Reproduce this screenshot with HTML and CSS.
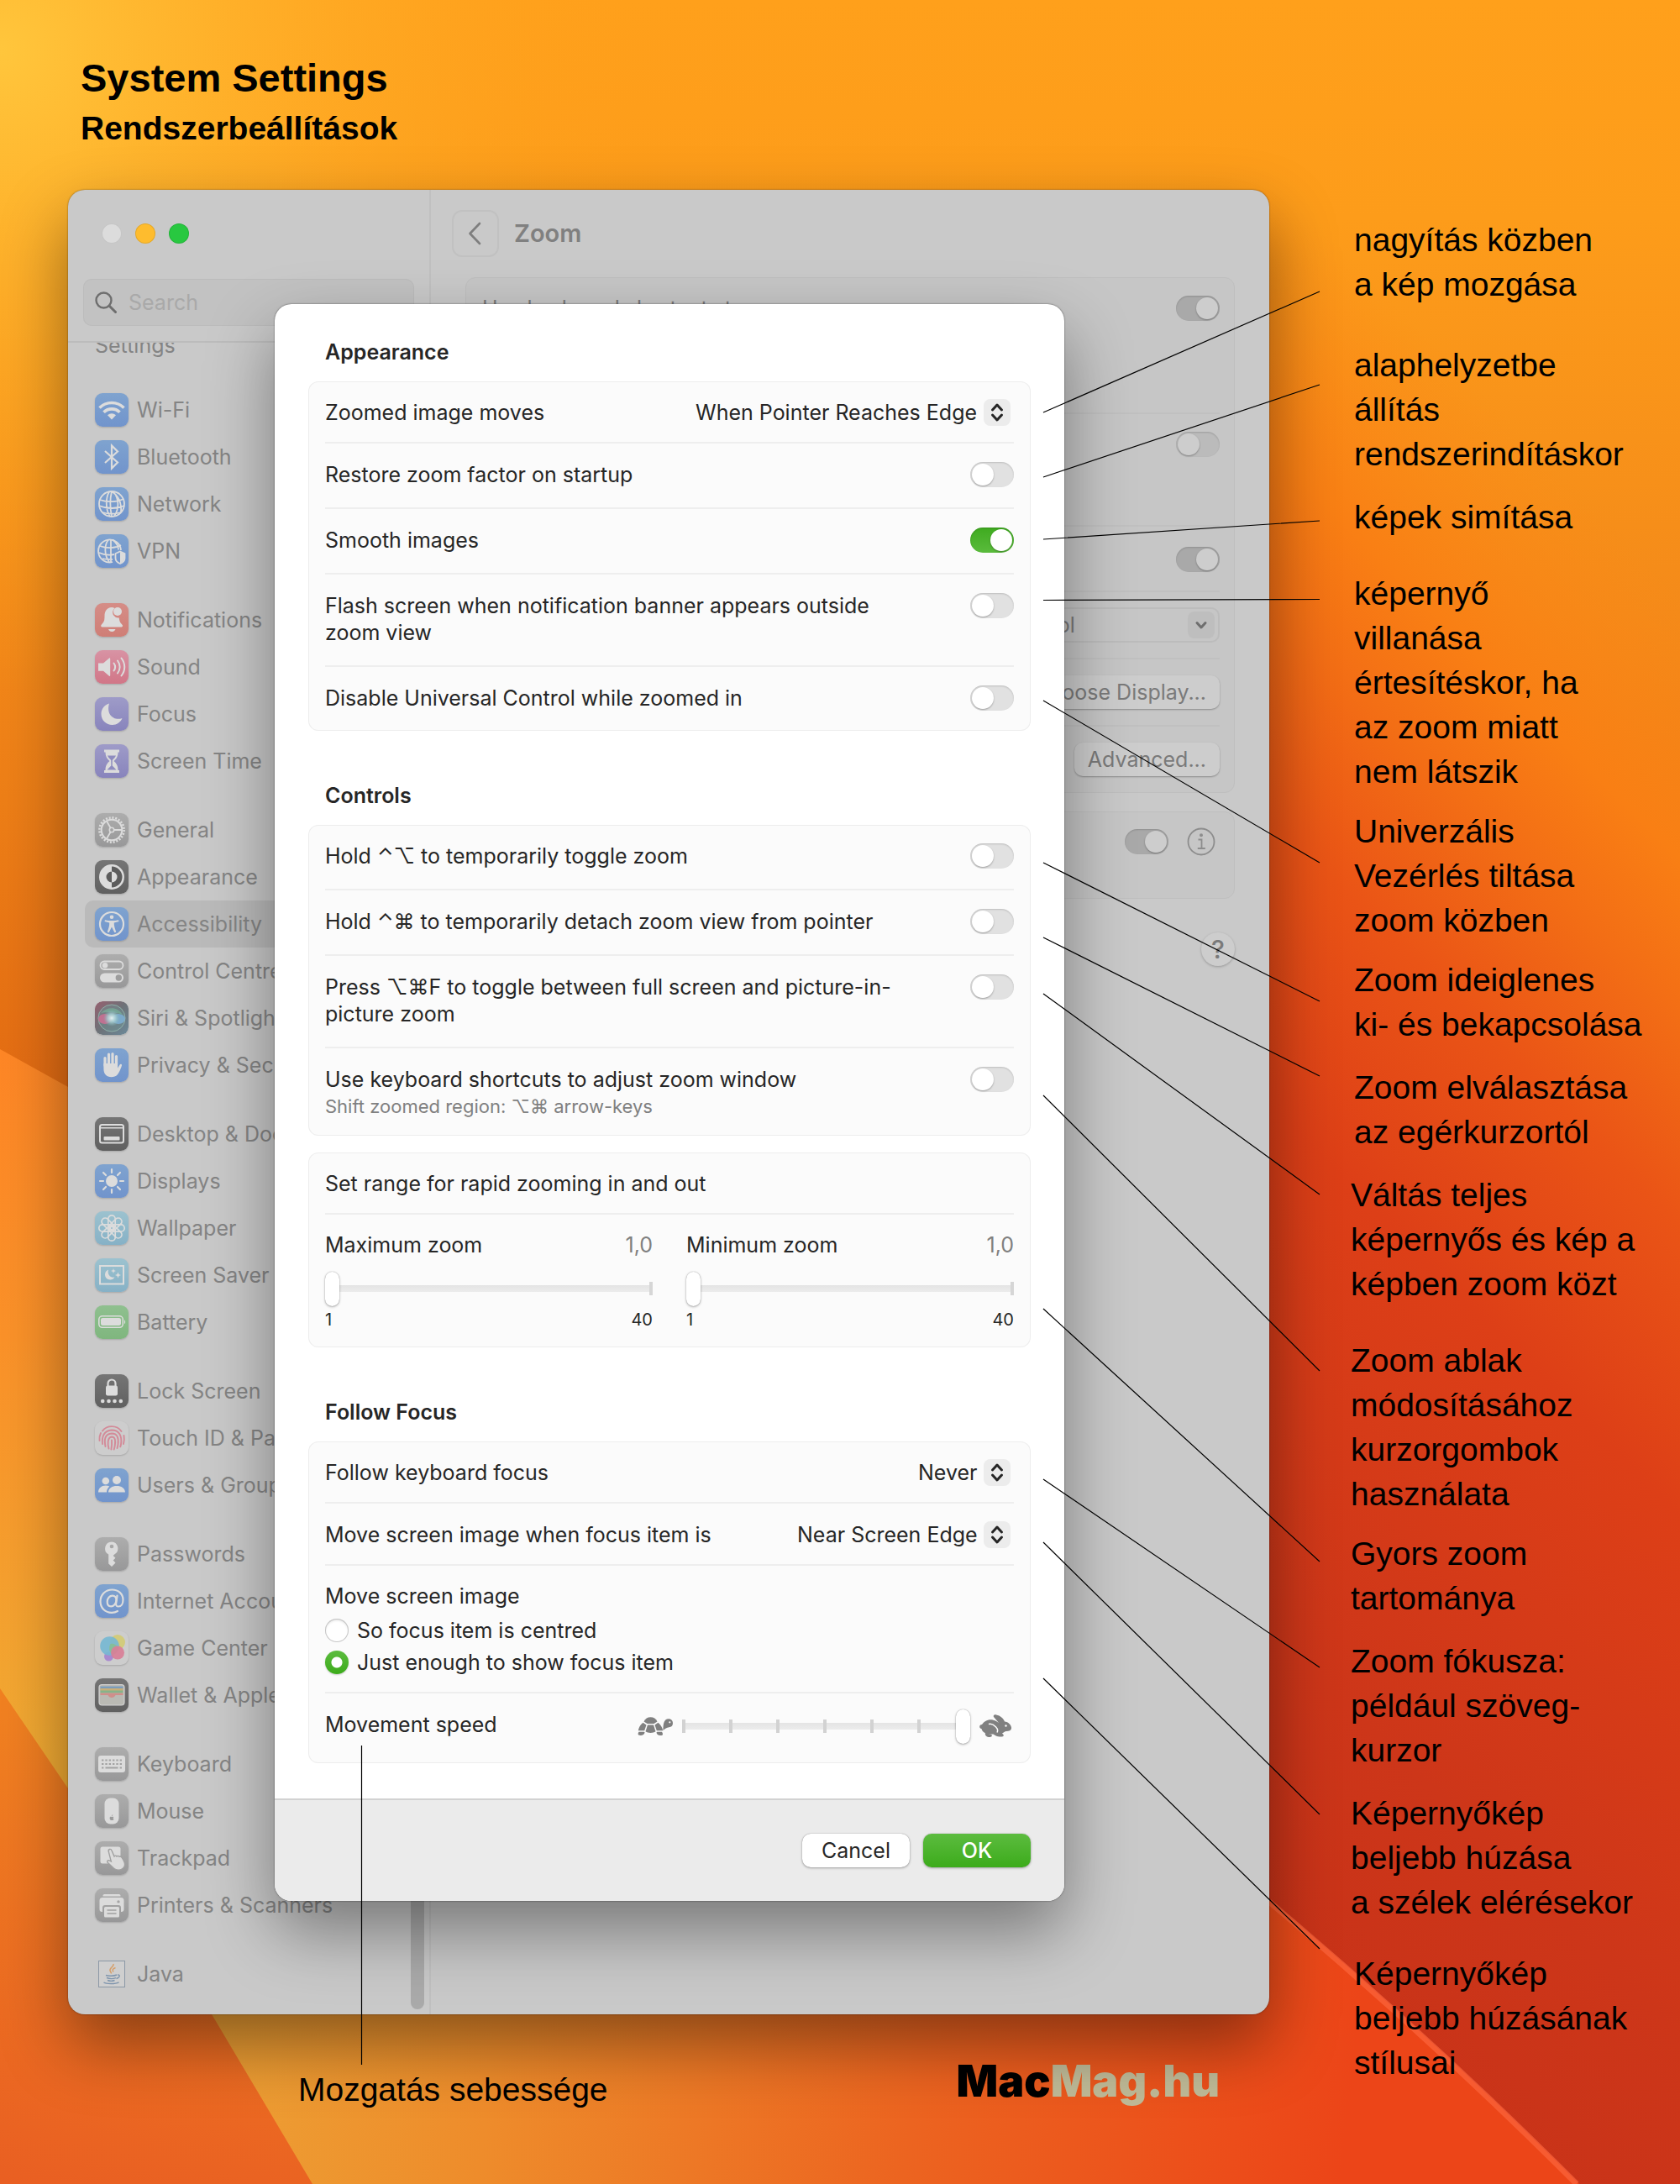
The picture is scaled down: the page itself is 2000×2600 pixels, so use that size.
FILE: index.html
```html
<!DOCTYPE html>
<html lang="hu">
<head>
<meta charset="utf-8">
<title>System Settings – Rendszerbeállítások</title>
<link rel="stylesheet" href="styles.css">
</head>
<body>
<svg class="sprite" aria-hidden="true">
  <symbol id="i-wifi" viewBox="0 0 40 40"><g fill="none" stroke="currentColor" stroke-width="3.6"><path d="M5.500 17.500a20.500 20.500 0 0 1 29 0"/><path d="M10.500 22.800a13.500 13.500 0 0 1 19 0"/></g><path d="M20 31.500l-5-5.200a7.200 7.200 0 0 1 10 0z" fill="currentColor"/></symbol>
  <symbol id="i-bluetooth" viewBox="0 0 40 40"><path d="M12 13l15 13.500L20 33.500V6.500l7 7L12 27" fill="none" stroke="currentColor" stroke-width="2.200"/></symbol>
  <symbol id="i-globe" viewBox="0 0 40 40"><g fill="none" stroke="currentColor" stroke-width="1.800"><circle cx="20" cy="20" r="15"/><path d="M17 5.500C13 12 12 26 18 35M20 5c-2 8-2 20 0 30M22 5.500c7 8 7 20 1 29M20 5c9 6 12 14 11 25M6 15c8 3 20 3 28-1M5 22c9 4 21 4 30 0M9 30c6 2 15 2 22 0"/></g></symbol>
  <symbol id="i-vpn" viewBox="0 0 40 40"><g fill="none" stroke="currentColor" stroke-width="1.800"><path d="M31 19A13.500 13.500 0 1 0 21 33"/><path d="M16 6.500C11 13 11 25 17 33M19 6v28M21 6.500c5 4 7 8 7 12M6 14c8 3 18 3 25-1M5 22c6 3 12 3 18 2M9 29c4 1 8 1 12 1"/></g><path d="M30 20.500l5.500 2.500v5.500c0 3-2 5-5.500 6.500-3.500-1.500-5.500-3.500-5.500-6.500V23z" fill="none" stroke="currentColor" stroke-width="1.800"/><path d="M30 21v13.500c3.500-1.500 5-3.500 5-6.500v-5z" fill="currentColor"/></symbol>
  <symbol id="i-bell" viewBox="0 0 40 40"><g fill="currentColor"><path d="M20 5c-6 .5-8.500 5-8.500 10 0 7-1 7.500-4 11-.8 1 0 2.500 1.200 2.500h22.800c1.200 0 2-1.500 1.200-2.500-2.200-2.500-3.500-3.500-3.900-8.500a6.500 6.500 0 0 1-6.800-9.500c.4-.9 1-1.600 1.500-2.100A11 11 0 0 0 20 5zM16 31h8.500c-.8 2-2.200 3-4.200 3s-3.600-1-4.300-3z"/><circle cx="27" cy="10" r="5"/></g></symbol>
  <symbol id="i-sound" viewBox="0 0 40 40"><path d="M4 15.500h6l7-6c.5-.4 1.200 0 1.200.7v20c0 .7-.7 1-1.200.6l-7-6H4z" fill="currentColor"/><g fill="none" stroke="currentColor" stroke-width="2" stroke-linecap="round"><path d="M22.500 15.500c2 2.800 2 6.300 0 9M27 12.500c3.500 4.500 3.500 10.500 0 15M31.500 9.500c5 6.500 5 14.500 0 21"/></g></symbol>
  <symbol id="i-moon" viewBox="0 0 40 40"><path d="M17 7.500c-5.500 1.500-9.500 6.500-9.500 12.500 0 7.500 6 13 13.200 13 5.300 0 10-3.300 11.800-8-9.500 3.500-19.500-4-15.500-17.500z" fill="currentColor"/></symbol>
  <symbol id="i-hourglass" viewBox="0 0 40 40"><path d="M11 6.500h18v3h-1.500c0 5-2 8-5 10.500 3 2.500 5 5.500 5 11H29v3H11v-3h1.500c0-5.500 2-8.500 5-11-3-2.500-5-5.500-5-10.500H11z" fill="currentColor"/><path d="M15 13.500h10c-1 2.500-3 4-4.200 5.500l-.1 6.500 4.800 5H14.500l4.800-5-.1-6.500c-1.200-1.500-3.200-3-4.200-5.500z" fill="#8f8cbf"/></symbol>
  <symbol id="i-gear" viewBox="0 0 40 40"><g fill="none" stroke="currentColor"><circle cx="20" cy="20" r="14.600" stroke-width="2.600" stroke-dasharray="2.100 1.720"/><circle cx="20" cy="20" r="12.300" stroke-width="2"/><circle cx="20" cy="20" r="2.700" stroke-width="1.600"/><path d="M22.700 20H32M18.700 17.700L13.800 9.300M18.700 22.300l-4.900 8.400" stroke-width="1.800"/></g></symbol>
  <symbol id="i-appearance" viewBox="0 0 40 40"><circle cx="20" cy="20" r="15" fill="currentColor"/><path d="M20 7.500a12.500 12.500 0 0 1 0 25zM20 13.500a6.500 6.500 0 0 0 0 13z" fill="#5c5c5c"/><path d="M20 13.500a6.500 6.500 0 0 1 0 13z" fill="currentColor"/></symbol>
  <symbol id="i-access" viewBox="0 0 40 40"><circle cx="20" cy="20" r="14" fill="none" stroke="currentColor" stroke-width="2.200"/><g fill="currentColor"><circle cx="20" cy="11.800" r="2.300"/><path d="M12 15.200c5 1.200 11 1.200 16 0l.5 1.700-5.700 1.700c-.3 3.400 1.200 7.400 2.500 10.800l-1.900.8L20 23.500l-3.400 6.700-1.900-.8c1.300-3.400 2.800-7.400 2.500-10.800l-5.700-1.700z"/></g></symbol>
  <symbol id="i-control" viewBox="0 0 40 40"><rect x="6.500" y="8.500" width="27" height="9.500" rx="4.700" fill="none" stroke="currentColor" stroke-width="1.800"/><circle cx="12" cy="13.200" r="3.300" fill="currentColor"/><rect x="6" y="22.500" width="28" height="11" rx="5.500" fill="currentColor"/><circle cx="28.300" cy="28" r="3.700" fill="#9d9d9d"/></symbol>
  <symbol id="i-siri" viewBox="0 0 40 40"><defs><linearGradient id="g-siri" x1="0" y1="0" x2="1" y2="1"><stop offset="0" stop-color="#96606f"/><stop offset=".5" stop-color="#6d7278"/><stop offset="1" stop-color="#6c8a9a"/></linearGradient><radialGradient id="g-siri2"><stop offset="0" stop-color="#e6f2f2"/><stop offset=".5" stop-color="#a5ccd0" stop-opacity=".85"/><stop offset="1" stop-color="#7fb2b8" stop-opacity="0"/></radialGradient></defs><rect width="40" height="40" rx="9" fill="url(#g-siri)"/><circle cx="20" cy="20" r="16" fill="#6f8f92" fill-opacity=".5" stroke="#8fb0a9" stroke-width="1"/><ellipse cx="12" cy="21" rx="8" ry="6" fill="#cc6f93" fill-opacity=".85"/><ellipse cx="28" cy="21" rx="8" ry="6" fill="#7fb0d6" fill-opacity=".85"/><path d="M7 14c8-8 20-8 26 2-8-3-18-4-26-2z" fill="#78b09a" fill-opacity=".7"/><circle cx="20" cy="20" r="10" fill="url(#g-siri2)"/></symbol>
  <symbol id="i-hand" viewBox="0 0 40 40"><g fill="none" stroke="currentColor" stroke-width="3.200" stroke-linecap="round"><path d="M12 20.500V11.500M16.500 19V7M21 19V6.500M25.500 19V9.500"/></g><path d="M10.400 18h16.700v5.500l2.500-4c1-1.300 2.900-.5 2.300 1.200-1.200 3.800-2.800 8-5 10.600-2 2.200-4.500 3-7.200 3-6 0-9.300-4-9.300-9.800z" fill="currentColor"/></symbol>
  <symbol id="i-desktop" viewBox="0 0 40 40"><rect x="6" y="9" width="28" height="21.500" rx="2.500" fill="none" stroke="currentColor" stroke-width="2"/><path d="M6 12.800h28" stroke="currentColor" stroke-width="1.600"/><rect x="10.500" y="23" width="19" height="4.500" rx="1" fill="currentColor"/></symbol>
  <symbol id="i-sun" viewBox="0 0 40 40"><circle cx="20" cy="20" r="7" fill="currentColor"/><path d="M20 6v4M20 30v4M6 20h4M30 20h4M10 10l3 3M27 27l3 3M30 10l-3 3M13 27l-3 3" stroke="currentColor" stroke-width="2.200" stroke-linecap="round"/></symbol>
  <symbol id="i-flower" viewBox="0 0 40 40"><g fill="none" stroke="currentColor" stroke-width="1.700"><g id="petals"><rect x="15.800" y="4.800" width="8.400" height="17" rx="4.200"/><rect x="15.800" y="18.200" width="8.400" height="17" rx="4.200"/><rect x="4.800" y="15.800" width="17" height="8.400" rx="4.200"/><rect x="18.200" y="15.800" width="17" height="8.400" rx="4.200"/></g><use href="#petals" transform="rotate(45 20 20)"/></g></symbol>
  <symbol id="i-saver" viewBox="0 0 40 40"><rect x="6" y="9" width="28" height="21.500" fill="none" stroke="currentColor" stroke-width="2"/><path d="M16 13.500c-2.500 1-4 3.200-4 5.800 0 3.500 2.700 6.200 6.200 6.200 2.300 0 4.200-1.200 5.200-3-4.900 1-8.900-3.200-7.400-9zM22 12l.8 2.200 2.200.8-2.200.8L22 18l-.8-2.200-2.200-.8 2.200-.8zM27.500 16.500l1 2.500 2.500 1-2.500 1-1 2.500-1-2.500-2.500-1 2.500-1z" fill="currentColor"/></symbol>
  <symbol id="i-battery" viewBox="0 0 40 40"><rect x="4.800" y="12.800" width="28.500" height="13.500" rx="4" fill="none" stroke="currentColor" stroke-width="1.600"/><rect x="7" y="15" width="24" height="9" rx="2.200" fill="currentColor"/><path d="M35 17.500c1.500.5 1.500 4 0 4.500z" fill="currentColor"/></symbol>
  <symbol id="i-lock" viewBox="0 0 40 40"><rect x="13" y="13.500" width="14" height="12" rx="2.200" fill="currentColor"/><path d="M15.500 14v-3a4.500 4.500 0 0 1 9 0v3" fill="none" stroke="currentColor" stroke-width="2.200"/><g fill="currentColor"><circle cx="9.200" cy="32" r="2.300"/><circle cx="16.500" cy="32" r="2.300"/><circle cx="23.500" cy="32" r="2.300"/><circle cx="30.800" cy="32" r="2.300"/></g></symbol>
  <symbol id="i-touch" viewBox="0 0 40 40"><g fill="none" stroke="#d38a98" stroke-width="1.900" stroke-linecap="round"><path d="M9 11.500C14 4.500 26 4 31.500 12M5.500 23c-.5-4 .5-7 1.500-9M34.500 17c.7 4 .3 7-.5 10M9 27c-.8-8 1-16 11-16.500 9 0 12.500 7 11 17-.2 1.200-.5 2-.8 2.800M12.500 30c-1.300-7-1.500-15 7.500-15.500 7 0 8.500 6 7.500 13-.2 1.700-.6 3-1 4.500M16.500 32.500c-1.500-5-1.800-13.500 3.500-14 4.500 0 4.500 5 3.800 10-.2 2-.6 3.500-1.100 5M20 22.500c.3 4 0 8-.6 11"/></g></symbol>
  <symbol id="i-users" viewBox="0 0 40 40"><g fill="currentColor"><circle cx="12.800" cy="15" r="4.300"/><circle cx="26" cy="14" r="5"/><path d="M4 28.500c0-5 3.800-8 8.800-8 1.700 0 3.200.4 4.500 1.100-2 1.700-3.200 4-3.300 6.900zM16 28.500c.2-5 4.400-7.500 10-7.500s9.800 2.500 10 7.500z"/></g></symbol>
  <symbol id="i-key" viewBox="0 0 40 40"><path fill-rule="evenodd" d="M20 5.500a8 8 0 0 0-3.800 15v11L20 35l4.500-4.500-2.800-3 2.800-2.800-2.800-2.700 1.500-1.500a8 8 0 0 0-3.200-15zm0 3.200a2.300 2.300 0 1 1 0 4.600 2.300 2.300 0 0 1 0-4.600z" fill="currentColor"/></symbol>
  <symbol id="i-at" viewBox="0 0 40 40"><g fill="none" stroke="currentColor" stroke-width="2.200" stroke-linecap="round"><path d="M27 32c-2 1.200-4.500 1.800-7 1.800C12 33.800 6.500 28 6.500 20.500 6.500 12.500 12.500 6.500 20.500 6.500 28 6.500 33.500 11.500 33.500 18.500c0 5-2.300 8-5.500 8-2 0-3.200-1.200-2.900-3.500l1.400-9.500"/><path d="M25.500 18.500c0-3-1.800-4.800-4.500-4.800-3.600 0-6.300 3-6.300 7.200 0 3.300 1.700 5.400 4.500 5.400 3.600 0 6.300-3.500 6.300-7.800z"/></g></symbol>
  <symbol id="i-game" viewBox="0 0 40 40"><circle cx="16.500" cy="30" r="5.500" fill="#a98ad0"/><circle cx="27" cy="13" r="9" fill="#d2cb7c"/><circle cx="17.500" cy="17.500" r="11.300" fill="#75b8d3" fill-opacity=".9"/><path d="M18.500 15a9 9 0 0 1 10 6 11.300 11.300 0 0 1-7 7 9 9 0 0 1-3-13z" fill="#86bf93" fill-opacity=".9"/><circle cx="27" cy="25.500" r="8" fill="#d97f97" fill-opacity=".92"/></symbol>
  <symbol id="i-wallet" viewBox="0 0 40 40"><rect x="5" y="7.500" width="30" height="24.500" rx="3.500" fill="#babab4" stroke="#d2d2d2" stroke-width="1.200"/><path d="M6.500 9.500h27v3h-27z" fill="#7c9dba"/><path d="M6.500 12h27v3h-27z" fill="#c9ae78"/><path d="M6.500 14.500h27v3h-27z" fill="#86b38a"/><path d="M6.500 17.500h27v2.500h-9c-1.500 4-7.500 4-9 0h-9z" fill="#cf8f8b"/></symbol>
  <symbol id="i-keyboard" viewBox="0 0 40 40"><rect x="4" y="10" width="32" height="20" rx="3" fill="currentColor"/><g stroke="#a3a3a3" stroke-width="2.200"><path d="M8 15.500h24M8 20h24" stroke-dasharray="2.400 1.930"/><path d="M8 24.500h2.400M12.500 24.500h15M29.600 24.500H32"/></g></symbol>
  <symbol id="i-mouse" viewBox="0 0 40 40"><rect x="11.500" y="4.500" width="17" height="31" rx="7" fill="currentColor"/><path d="M19.800 26c.2-1 .8-1.600 1.600-1.700 0 1-.7 1.700-1.600 1.700zm-2 1.200c.8-.7 1.600-.2 2.200-.2s1.600-.6 2.300.2c-.9.800-.7 2 .2 2.500-.6 1.400-1.300 1.500-2.400 1.200-1.600.6-3-1.500-2.300-3.700z" fill="#9c9c9c"/></symbol>
  <symbol id="i-trackpad" viewBox="0 0 40 40"><rect x="6.500" y="6.500" width="24" height="20" rx="2.500" fill="currentColor"/><path d="M17.500 9.500c1.200-.4 2 .2 2.500 1.500l3 7c1-1.200 2.300-1 3 0 1-1 2.300-.7 3 .3 1-.6 2-.3 2.800.8 2 2.700 4 6.400 3.800 9-.3 3.500-3.500 6-7 6-4.500 0-6.500-2-9.500-5l-4-3.800c-1.200-1.400.3-3.100 2-2.400l2.200 1-3-11.500c-.4-1.400 0-2.500 1.200-2.900z" fill="currentColor" stroke="#a0a0a0" stroke-width="1.400"/></symbol>
  <symbol id="i-printer" viewBox="0 0 40 40"><path d="M11.500 7h17a2 2 0 0 1 2 2.500h-21a2 2 0 0 1 2-2.500z" fill="currentColor"/><path fill-rule="evenodd" d="M9 11h22a3.500 3.500 0 0 1 3.500 3.500V25a3 3 0 0 1-3 3H31v-5a3 3 0 0 0-3-3H12a3 3 0 0 0-3 3v5h-.5a3 3 0 0 1-3-3V14.500A3.500 3.500 0 0 1 9 11zm19 3.200a1.700 1.700 0 1 0 0 3.400 1.700 1.700 0 0 0 0-3.400z" fill="currentColor"/><rect x="11" y="22" width="18" height="12.500" rx="1.500" fill="currentColor"/><path d="M14.500 26h11M14.500 30h11" stroke="#a0a0a0" stroke-width="1.600"/></symbol>
  <symbol id="i-java" viewBox="0 0 40 40"><rect x="4.500" y="4.500" width="31" height="31" fill="#cfcfcf" stroke="#8b97a5"/><g fill="none" stroke="#d5a06c" stroke-width="1.500"><path d="M22 8c1 3-5 5-4 8 .5 1.500 1.500 2 1.500 3.500M24.500 12.500c-4 1.500-4 3-2.500 5"/></g><g fill="none" stroke="#7f95ad" stroke-width="1.400"><path d="M13 21.500c3 1.200 10 1 13-.5M14 24.500c3 1.200 8 1.200 11 .2M15 27.500c2.500 1 6 1 8.500 0M10.500 30c3 2 14 2 18-.2M27 21c3-.5 3.500 3-1.500 4.500"/></g></symbol>
  <symbol id="i-turtle" viewBox="0 0 42 22"><g fill="currentColor"><path d="M7.500 5.500C9 2 12 .3 15.500.3S22 2 23.500 5.500L19.500 8h-8z"/><path d="M6.500 6.800l4 2.700-2.300 6.800H.8C1.500 12.500 3.500 9 6.500 6.800zM24.500 6.800l-4 2.700 2.300 6.800h7.400C29.500 12.500 27.500 9 24.500 6.800z"/><path d="M12 9.500h7l2.500 7.800c-3 2.300-9 2.300-12 0z"/><path d="M30.500 16c-.2-3 .1-6 .7-8.700C32 4.200 34 2.300 37 2.300s5 2.200 5 5.200c0 3-1.800 4.500-4.500 4.800-3 .3-4.500 1.700-7 3.700z"/><path d="M1.500 17.800h6c1 0 1.200.6.800 1.400C7.500 21 6 22 3.800 22 1.500 22 .5 21.400.6 20.200c0-.9.300-1.700.9-2.400zM23.500 17.800h5.400c.8.800 1.100 1.700 1.100 2.600 0 1.100-1 1.600-3 1.600-2.300 0-3.600-1-4.300-2.800-.3-.8 0-1.400.8-1.400z"/></g><circle cx="38.300" cy="6.300" r="1.100" fill="#fbfbfb"/></symbol>
  <symbol id="i-rabbit" viewBox="0 0 38 28"><g fill="currentColor"><path d="M2 17c-3-1.500-2-5 1-5C6 7 13 4 20 8l3 2-6-7c-1-2 1-3 3-2.500 5 1 8.500 4 10 8 4.500.5 7.500 3.500 8 7 .4 3-2 4.500-6 4.500-2 0-3 1.500-5 2.500l1.500 1.500c1 2-1 2.500-3 2.500-5 0-7-1.500-9-3-6 .5-13-1-14-6.500z"/><path d="M7 21c3 2 5 2.500 7 2.800 1.500 1 1 3.200-1.500 3.200-4 0-6.500-2-5.500-6z"/></g><path d="M11 11.500c5-1.500 7 2 9 4s2 4 1 6" fill="none" stroke="#fbfbfb" stroke-width="1.500"/><circle cx="31.500" cy="13.500" r="1.200" fill="#fbfbfb"/></symbol>
  <symbol id="i-updown" viewBox="0 0 32 32"><path d="M10.500 13L16 7l5.500 6M10.500 19l5.500 6 5.500-6" fill="none" stroke="#262626" stroke-width="3" stroke-linecap="round" stroke-linejoin="round"/></symbol>
</svg>

<svg class="wallpaper" viewBox="0 0 2000 2600" preserveAspectRatio="none" aria-hidden="true">
  <defs>
    <linearGradient id="w-base" x1="0" y1="0" x2="0" y2="1"><stop offset="0" stop-color="#ffa01b"/><stop offset=".1" stop-color="#fd9c1a"/><stop offset=".3" stop-color="#f38819"/><stop offset=".5" stop-color="#e46c13"/></linearGradient>
    <radialGradient id="w-glow" gradientUnits="userSpaceOnUse" cx="0" cy="60" r="760"><stop offset="0" stop-color="#ffc63c"/><stop offset=".45" stop-color="#ffb12a" stop-opacity=".7"/><stop offset="1" stop-color="#ffa01b" stop-opacity="0"/></radialGradient>
    <linearGradient id="w-right" gradientUnits="userSpaceOnUse" x1="1900" y1="600" x2="750" y2="1750"><stop offset="0" stop-color="#fc8a16" stop-opacity="0"/><stop offset=".14" stop-color="#f97f14"/><stop offset=".22" stop-color="#f36e15"/><stop offset=".33" stop-color="#ea5416"/><stop offset=".48" stop-color="#dd3f17"/><stop offset=".75" stop-color="#cd3619"/><stop offset="1" stop-color="#c63118"/></linearGradient>
    <linearGradient id="w-left" gradientUnits="userSpaceOnUse" x1="0" y1="1250" x2="60" y2="2100"><stop offset="0" stop-color="#ff8726"/><stop offset=".4" stop-color="#fb9229"/><stop offset="1" stop-color="#f2ab33"/></linearGradient>
    <linearGradient id="w-bottom" gradientUnits="userSpaceOnUse" x1="250" y1="2400" x2="1600" y2="2560"><stop offset="0" stop-color="#eda034"/><stop offset=".25" stop-color="#ee8c2b"/><stop offset=".62" stop-color="#ec6420"/><stop offset="1" stop-color="#ec4518"/></linearGradient>
    <linearGradient id="w-tri" gradientUnits="userSpaceOnUse" x1="120" y1="2000" x2="0" y2="2600"><stop offset="0" stop-color="#f28421"/><stop offset="1" stop-color="#e95f22"/></linearGradient>
  </defs>
  <rect width="2000" height="2600" fill="url(#w-base)"/>
  <rect width="1000" height="900" fill="url(#w-glow)"/>
  <path d="M1400 226H2000V2600H1400z" fill="url(#w-right)"/>
  <path d="M0 1249L81 1294L700 1600V2300H0z" fill="url(#w-left)"/>
  <path d="M200 2200H1400L1511 2261Q1700 2420 1880 2600H200z" fill="url(#w-bottom)"/>
  <path d="M1511 2264Q1700 2423 1877 2600" fill="none" stroke="#ff6a42" stroke-width="7" opacity=".6"/>
  <path d="M0 2010L81 2129L252 2398L372 2600H0z" fill="url(#w-tri)"/>
</svg>

<div class="page">
  <header class="page-head">
    <h1>System Settings</h1>
    <p>Rendszerbeállítások</p>
  </header>

  <main class="window">
    <aside class="sidebar">
      <div class="sidebar-head">
        <div class="lights"><span class="light"></span><span class="light light-min"></span><span class="light light-max"></span></div>
        <label class="search">
          <svg viewBox="0 0 26 26" width="26" height="26" aria-hidden="true"><circle cx="10.500" cy="10.500" r="9" fill="none" stroke="#6e6e6e" stroke-width="2.400"/><path d="M17 17l7.500 7.500" stroke="#6e6e6e" stroke-width="3" stroke-linecap="round"/></svg>
          <input type="search" placeholder="Search" aria-label="Search">
        </label>
      </div>
      <nav class="list">
        <a class="cut" href="#">Settings</a>
        <ul>
          <li><a href="#"><svg class="ic blue"><use href="#i-wifi"/></svg>Wi-Fi</a></li>
          <li><a href="#"><svg class="ic blue"><use href="#i-bluetooth"/></svg>Bluetooth</a></li>
          <li><a href="#"><svg class="ic blue"><use href="#i-globe"/></svg>Network</a></li>
          <li><a href="#"><svg class="ic blue"><use href="#i-vpn"/></svg>VPN</a></li>
        </ul>
        <ul>
          <li><a href="#"><svg class="ic red"><use href="#i-bell"/></svg>Notifications</a></li>
          <li><a href="#"><svg class="ic pink"><use href="#i-sound"/></svg>Sound</a></li>
          <li><a href="#"><svg class="ic violet"><use href="#i-moon"/></svg>Focus</a></li>
          <li><a href="#"><svg class="ic violet"><use href="#i-hourglass"/></svg>Screen Time</a></li>
        </ul>
        <ul>
          <li><a href="#"><svg class="ic gray"><use href="#i-gear"/></svg>General</a></li>
          <li><a href="#"><svg class="ic dark"><use href="#i-appearance"/></svg>Appearance</a></li>
          <li><a href="#" class="current" aria-current="page"><svg class="ic blue"><use href="#i-access"/></svg>Accessibility</a></li>
          <li><a href="#"><svg class="ic gray"><use href="#i-control"/></svg>Control Centre</a></li>
          <li><a href="#"><svg class="ic"><use href="#i-siri"/></svg>Siri &amp; Spotlight</a></li>
          <li><a href="#"><svg class="ic blue"><use href="#i-hand"/></svg>Privacy &amp; Security</a></li>
        </ul>
        <ul>
          <li><a href="#"><svg class="ic dark"><use href="#i-desktop"/></svg>Desktop &amp; Dock</a></li>
          <li><a href="#"><svg class="ic blue"><use href="#i-sun"/></svg>Displays</a></li>
          <li><a href="#"><svg class="ic cyan"><use href="#i-flower"/></svg>Wallpaper</a></li>
          <li><a href="#"><svg class="ic cyan"><use href="#i-saver"/></svg>Screen Saver</a></li>
          <li><a href="#"><svg class="ic green"><use href="#i-battery"/></svg>Battery</a></li>
        </ul>
        <ul>
          <li><a href="#"><svg class="ic dark"><use href="#i-lock"/></svg>Lock Screen</a></li>
          <li><a href="#"><svg class="ic pale"><use href="#i-touch"/></svg>Touch ID &amp; Password</a></li>
          <li><a href="#"><svg class="ic blue"><use href="#i-users"/></svg>Users &amp; Groups</a></li>
        </ul>
        <ul>
          <li><a href="#"><svg class="ic gray"><use href="#i-key"/></svg>Passwords</a></li>
          <li><a href="#"><svg class="ic blue"><use href="#i-at"/></svg>Internet Accounts</a></li>
          <li><a href="#"><svg class="ic pale"><use href="#i-game"/></svg>Game Center</a></li>
          <li><a href="#"><svg class="ic dark"><use href="#i-wallet"/></svg>Wallet &amp; Apple Pay</a></li>
        </ul>
        <ul>
          <li><a href="#"><svg class="ic gray"><use href="#i-keyboard"/></svg>Keyboard</a></li>
          <li><a href="#"><svg class="ic gray"><use href="#i-mouse"/></svg>Mouse</a></li>
          <li><a href="#"><svg class="ic gray"><use href="#i-trackpad"/></svg>Trackpad</a></li>
          <li><a href="#"><svg class="ic gray"><use href="#i-printer"/></svg>Printers &amp; Scanners</a></li>
        </ul>
        <ul>
          <li><a href="#"><svg class="ic flat"><use href="#i-java"/></svg>Java</a></li>
        </ul>
        <span class="scrollbar"></span>
      </nav>
    </aside>

    <section class="pane">
      <div class="pane-head">
        <button class="back" type="button" aria-label="Back"><svg viewBox="0 0 18 30" width="18" height="30"><path d="M14 3L2.500 15L14 27" fill="none" stroke="#7e7e7e" stroke-width="2.600" stroke-linecap="round" stroke-linejoin="round"/></svg></button>
        <h2>Zoom</h2>
      </div>
      <div class="dim-box">
        <label class="dim-row tall">Use keyboard shortcuts to zoom<input class="toggle off-focus" type="checkbox" checked></label>
        <label class="dim-row mid"><input class="toggle off-focus" type="checkbox" aria-label="Scroll gesture"></label>
        <label class="dim-row short"><input class="toggle off-focus" type="checkbox" checked aria-label="Modifier keys"></label>
        <div class="dim-row"><span class="pop"><select aria-label="Modifier key"><option>⌃ Control</option></select><svg viewBox="0 0 32 32" width="32" height="32" aria-hidden="true"><path d="M11 13.500l5 5.500 5-5.500" fill="none" stroke="#6e6e6e" stroke-width="3" stroke-linecap="round" stroke-linejoin="round"/></svg></span></div>
        <div class="dim-row"><button class="dim-btn" type="button">Choose Display...</button></div>
        <div class="dim-row"><button class="dim-btn" type="button">Advanced...</button></div>
      </div>
      <div class="dim-box second">
        <div class="dim-row info-row"><input class="toggle off-focus" type="checkbox" checked aria-label="Hover text"><svg viewBox="0 0 34 34" width="34" height="34" aria-hidden="true"><circle cx="17" cy="17" r="15.500" fill="none" stroke="#8d8d8d" stroke-width="1.800"/><circle cx="17" cy="9.200" r="2" fill="#8d8d8d"/><path d="M13.500 14.500h4V25M12.800 25h9" fill="none" stroke="#8d8d8d" stroke-width="1.800"/></svg></div>
      </div>
      <button class="help" type="button" aria-label="Help">?</button>
    </section>

    <div class="sheet" role="dialog" aria-label="Zoom settings">
      <div class="sheet-body">
        <h3>Appearance</h3>
        <div class="group">
          <div class="row compact"><label for="moves">Zoomed image moves</label><span class="popup"><select id="moves"><option>When Pointer Reaches Edge</option></select><svg><use href="#i-updown"/></svg></span></div>
          <label class="row">Restore zoom factor on startup<input class="toggle" type="checkbox"></label>
          <label class="row">Smooth images<input class="toggle" type="checkbox" checked></label>
          <label class="row"><span>Flash screen when notification banner appears outside<br>zoom view</span><input class="toggle" type="checkbox"></label>
          <label class="row">Disable Universal Control while zoomed in<input class="toggle" type="checkbox"></label>
        </div>

        <h3>Controls</h3>
        <div class="group">
          <label class="row"><span>Hold <span class="keys">⌃⌥</span> to temporarily toggle zoom</span><input class="toggle" type="checkbox"></label>
          <label class="row"><span>Hold <span class="keys">⌃⌘</span> to temporarily detach zoom view from pointer</span><input class="toggle" type="checkbox"></label>
          <label class="row"><span>Press <span class="keys">⌥⌘</span>F to toggle between full screen and picture-in-<br>picture zoom</span><input class="toggle" type="checkbox"></label>
          <label class="row"><span>Use keyboard shortcuts to adjust zoom window<small>Shift zoomed region: <span class="keys">⌥⌘</span> arrow-keys</small></span><input class="toggle" type="checkbox"></label>
        </div>
        <div class="group">
          <div class="row compact">Set range for rapid zooming in and out</div>
          <div class="row ranges">
            <div class="range">
              <p><label for="maxz">Maximum zoom</label><output>1,0</output></p>
              <input id="maxz" type="range" min="1" max="40" value="1">
              <p class="scale"><span>1</span><span>40</span></p>
            </div>
            <div class="range">
              <p><label for="minz">Minimum zoom</label><output>1,0</output></p>
              <input id="minz" type="range" min="1" max="40" value="1">
              <p class="scale"><span>1</span><span>40</span></p>
            </div>
          </div>
        </div>

        <h3>Follow Focus</h3>
        <div class="group">
          <div class="row compact"><label for="follow">Follow keyboard focus</label><span class="popup"><select id="follow"><option>Never</option></select><svg><use href="#i-updown"/></svg></span></div>
          <div class="row compact"><label for="when">Move screen image when focus item is</label><span class="popup"><select id="when"><option>Near Screen Edge</option></select><svg><use href="#i-updown"/></svg></span></div>
          <fieldset class="row radios">
            <legend>Move screen image</legend>
            <label><input type="radio" name="move">So focus item is centred</label>
            <label><input type="radio" name="move" checked>Just enough to show focus item</label>
          </fieldset>
          <div class="row speed"><label for="speed">Movement speed</label>
            <span class="speed-set"><svg class="turtle"><use href="#i-turtle"/></svg><input id="speed" type="range" min="0" max="6" value="6"><svg class="rabbit"><use href="#i-rabbit"/></svg></span></div>
        </div>
      </div>
      <footer class="sheet-foot">
        <button class="btn" type="button">Cancel</button>
        <button class="btn primary" type="button">OK</button>
      </footer>
    </div>
  </main>

  <aside class="notes">
    <p>nagyítás közben<br>a kép mozgása</p>
    <p class="gap-xl">alaphelyzetbe<br>állítás<br>rendszerindításkor</p>
    <p class="gap-s">képek simítása</p>
    <p class="gap-l">képernyő<br>villanása<br>értesítéskor, ha<br>az zoom miatt<br>nem látszik</p>
    <p class="gap-xs">Univerzális<br>Vezérlés tiltása<br>zoom közben</p>
    <p class="gap-xs">Zoom ideiglenes<br>ki- és bekapcsolása</p>
    <p class="gap-s">Zoom elválasztása<br>az egérkurzortól</p>
    <p class="gap-s out">Váltás teljes<br>képernyős és kép a<br>képben zoom közt</p>
    <p class="gap-l out">Zoom ablak<br>módosításához<br>kurzorgombok<br>használata</p>
    <p class="gap-xs out">Gyors zoom<br>tartománya</p>
    <p class="gap-s out">Zoom fókusza:<br>például szöveg-<br>kurzor</p>
    <p class="gap-s out">Képernyőkép<br>beljebb húzása<br>a szélek elérésekor</p>
    <p class="gap-m">Képernyőkép<br>beljebb húzásának<br>stílusai</p>
  </aside>

  <footer class="page-foot">
    <p>Mozgatás sebessége</p>
    <a class="brand" href="#"><span>Mac</span>Mag.hu</a>
  </footer>
</div>

<svg class="leaders" viewBox="0 0 2000 2600" preserveAspectRatio="none" aria-hidden="true">
  <path d="M1242 491L1571 347M1242 568L1571 458M1242 642L1571 620M1242 714.500L1571 713.500M1242 834L1571 1027M1242 1027L1571 1192M1242 1116L1571 1281M1242 1183L1571 1422M1242 1304L1571 1632M1242 1558L1571 1859M1242 1761L1571 1985M1242 1836L1571 2160M1242 1998L1571 2320M430.500 2078V2458"/>
</svg>
</body>
</html>
```
FILE: styles.css
```css
* { box-sizing: border-box; }
html, body { margin: 0; }
body {
  position: relative;
  min-height: 100vh;
  overflow-x: hidden;
  font: 400 25px/32px Inter, "Noto Sans", "DejaVu Sans", sans-serif;
  color: #262626;
}
h1, h2, h3, p, ul, fieldset { margin: 0; padding: 0; }
ul { list-style: none; }
a { color: inherit; text-decoration: none; }
input, select, button { font: inherit; color: inherit; margin: 0; }
.sprite { position: absolute; width: 0; height: 0; }
.wallpaper, .leaders { position: absolute; inset: 0; width: 100%; height: 100%; }
.leaders { pointer-events: none; }
.leaders path { fill: none; stroke: #000; stroke-width: 1.2; }

.page {
  position: relative;
  display: grid;
  grid-template-columns: minmax(0, 1fr) 392px;
  grid-template-rows: auto auto 1fr;
  column-gap: 97px;
  padding-left: 81px;
  min-height: 100vh;
}
.page-head, .notes, .page-foot { font-family: "Liberation Sans", Arial, sans-serif; color: #000; }
.page-head { grid-column: 1 / -1; padding: 63px 15px 43px; font-weight: 700; }
.page-head h1 { font-size: 47px; line-height: 60px; }
.page-head p { font-size: 39px; line-height: 60px; }

.notes { grid-column: 2; grid-row: 2 / 4; padding-top: 33px; font-size: 39px; line-height: 53px; white-space: nowrap; }
.notes p { padding-left: 4px; }
.notes .out { padding-left: 0; }
.notes .gap-xs { padding-top: 18px; }
.notes .gap-s { padding-top: 22px; }
.notes .gap-m { padding-top: 32px; }
.notes .gap-l { padding-top: 38px; }
.notes .gap-xl { padding-top: 43px; }

.page-foot { grid-column: 1; grid-row: 3; display: flex; justify-content: space-between; align-items: flex-start; padding: 50px 59px 0 274px; }
.page-foot p { font-size: 39px; line-height: 80px; }
.brand { font: 900 52px/60px Inter, sans-serif; color: #c0bb98; }
.brand span { color: #000; }

/* window */
.window {
  position: relative;
  grid-column: 1;
  grid-row: 2;
  display: grid;
  grid-template-columns: 432px minmax(0, 1fr);
  border-radius: 20px;
  background: #c9c9c9;
  box-shadow: 0 0 2px rgba(0, 0, 0, .5), 0 36px 80px rgba(0, 0, 0, .42);
  color: #848484;
}
.sidebar { display: flex; flex-direction: column; border-right: 2px solid #c0c0c0; }
.sidebar-head { height: 182px; border-bottom: 2px solid #bcbcbc; padding: 40px 18px 0; }
.lights { display: flex; gap: 16px; padding: 0 22px; }
.light { width: 24px; height: 24px; border-radius: 50%; background: #dcdcdc; box-shadow: inset 0 0 0 1px rgba(0, 0, 0, .1); }
.light-min { background: #febc2e; }
.light-max { background: #28c840; }
.search { display: flex; align-items: center; gap: 14px; height: 56px; margin-top: 42px; padding: 0 14px; border-radius: 10px; background: #c2c2c2; box-shadow: inset 0 0 0 1px #bcbcbc; }
.search input { flex: 1; min-width: 0; border: 0; background: none; outline: 0; padding: 0; }
.search input::placeholder { color: #a9a9a9; opacity: 1; }

.list { position: relative; overflow: hidden; padding: 0 20px 20px; white-space: nowrap; }
.cut { display: block; margin: -13px 0 33px; padding-left: 12px; }
.list ul + ul { margin-top: 26px; }
.list li a { display: flex; align-items: center; gap: 10px; height: 56px; padding: 0 12px; border-radius: 10px; }
.list li a.current { background: #bababa; }
.scrollbar { position: absolute; right: 6px; top: 300px; bottom: 6px; width: 16px; border-radius: 8px; background: #aaa; }

.ic { flex: none; width: 40px; height: 40px; border-radius: 9px; color: #dcdcdc; box-shadow: 0 1px 2px rgba(0, 0, 0, .18); }
.blue { background: linear-gradient(#7fa3cf, #7194cc); }
.red { background: linear-gradient(#d58d87, #cf7e76); }
.pink { background: linear-gradient(#d893a4, #d17687); }
.violet { background: linear-gradient(#9e9bc8, #8884bc); }
.gray { background: linear-gradient(#adadad, #989899); }
.dark { background: linear-gradient(#757575, #606060); }
.cyan { background: linear-gradient(#9cc2cf, #86b1c6); }
.green { background: linear-gradient(#8fc08f, #7fb67e); }
.pale { background: #cdcdcd; }
.flat { box-shadow: none; }

/* dimmed pane */
.pane { display: flex; flex-direction: column; padding: 24px 41px 0; color: #7a7a7a; }
.pane-head { display: flex; align-items: center; gap: 18px; height: 56px; margin-left: -16px; }
.pane-head h2 { font-size: 29px; font-weight: 600; color: #808080; }
.back { display: grid; place-items: center; width: 56px; height: 56px; padding: 0; border: 2px solid #c1c1c1; border-radius: 12px; background: none; }
.dim-box { margin-top: 24px; padding: 0 17px 0 19px; border: 1px solid #bfbfbf; border-radius: 12px; background: #c6c6c6; }
.dim-row { display: flex; justify-content: flex-end; align-items: center; height: 80px; }
.dim-row + .dim-row { border-top: 2px solid #c0c0c0; }
.dim-row.tall { height: 160px; align-items: flex-start; justify-content: space-between; padding-top: 20px; }
.dim-row.mid { height: 134px; align-items: flex-start; padding-top: 20px; }
.dim-row.short { height: 78px; }
.pop { display: flex; align-items: center; height: 42px; padding: 0 4px 0 14px; border: 2px solid #bcbcbc; border-radius: 10px; }
.pop select { height: 32px; border: 0; padding: 0; margin-right: 134px; background: none; appearance: none; }
.pop svg { border-radius: 8px; background: #bebebe; }
.dim-btn, .btn { height: 40px; border: 0; border-radius: 10px; padding: 0 16px; }
.dim-btn { background: #cdcdcd; box-shadow: 0 1px 2px rgba(0, 0, 0, .3); }
.second { margin-top: 22px; padding-right: 22px; }
.dim-row.info-row { height: 102px; align-items: flex-start; gap: 22px; padding-top: 18px; }
.info-row .toggle { margin-top: 2px; }
.help { align-self: flex-end; width: 40px; height: 40px; margin-top: 40px; padding: 0; border: 0; border-radius: 50%; background: #cdcdcd; box-shadow: 0 1px 3px rgba(0, 0, 0, .25); font-size: 30px; font-weight: 500; line-height: 40px; }

.toggle { flex: none; appearance: none; display: flex; align-items: center; width: 52px; height: 30px; margin-top: 1px; padding: 2px; border-radius: 15px; background: #e1e1e1; box-shadow: inset 0 1px 2px rgba(0, 0, 0, .16); }
.toggle::before { content: ""; width: 26px; height: 26px; border-radius: 50%; background: #fff; box-shadow: 0 1px 2px rgba(0, 0, 0, .3); }
.toggle:checked { justify-content: flex-end; background: linear-gradient(#3fab20, #5abb3c); }
.off-focus { background: #bbb; }
.off-focus:checked { background: #a9a9a9; }
.off-focus::before { background: #cdcdcd; }

/* sheet */
.sheet { position: absolute; top: 136px; left: 50%; width: 940px; margin-left: -469px; border-radius: 20px; overflow: hidden; background: #fff; color: #262626; box-shadow: 0 0 2px rgba(0, 0, 0, .6), 0 36px 80px rgba(0, 0, 0, .4); }
.sheet-body { display: flow-root; padding: 0 40px 42px; }
.sheet h3 { margin: 61px 20px 19px; font-size: 25px; font-weight: 600; line-height: 32px; }
.sheet h3:first-child { margin-top: 41px; }
.group { padding: 0 20px; border-radius: 12px; background: #fbfbfb; box-shadow: inset 0 0 0 1px #ededed; }
.group + .group { margin-top: 20px; }
.row { display: flex; justify-content: space-between; align-items: flex-start; padding: 21px 0 23px; }
.row + .row { border-top: 2px solid #eee; }
.row.compact { padding: 21px 0 19px; }
.row small { display: block; padding-top: 4px; font-size: 22px; line-height: 24px; color: #808080; }
.keys { font-family: Inter, "DejaVu Sans", sans-serif; }
.popup { display: flex; align-items: center; gap: 7px; margin-right: 4px; height: 32px; }
.popup select { height: 32px; border: 0; padding: 0; background: none; appearance: none; }
.popup svg { width: 32px; height: 32px; border-radius: 8px; background: #ececec; }

.row.ranges { gap: 40px; padding: 20px 0; }
.range { flex: 1; min-width: 0; display: flex; flex-direction: column; }
.range p { display: flex; justify-content: space-between; }
.range output { color: #808080; }
.range .scale { font-size: 20px; line-height: 26px; margin-top: 4px; }
.range input { margin-top: 16px; }
input[type="range"] {
  appearance: none;
  width: 100%;
  height: 40px;
  background:
    linear-gradient(#d6d6d6, #d6d6d6) right center / 4px 16px no-repeat,
    linear-gradient(#e4e4e4, #ececec) center / 100% 8px no-repeat;
}
input[type="range"]::-webkit-slider-thumb { appearance: none; width: 17px; height: 41px; border-radius: 9px; background: #fff; box-shadow: 0 0 1px rgba(0, 0, 0, .4), 0 1px 3px rgba(0, 0, 0, .3); }
.row.speed { padding: 19px 0 24px; line-height: 36px; }
.speed-set { display: flex; align-items: center; gap: 11px; color: #808080; margin-right: 3px; }
.turtle { width: 42px; height: 22px; }
.rabbit { width: 38px; height: 28px; }
.speed input[type="range"] {
  width: 343px;
  background:
    linear-gradient(90deg, #d2d2d2 4px, transparent 4px) left center / 56px 16px repeat-x,
    linear-gradient(#e4e4e4, #ececec) center / 100% 8px no-repeat;
}

.row.radios { flex-direction: column; padding: 20px 0 16px; border-width: 2px 0 0; min-width: 0; }
.radios legend { float: left; padding: 0; margin-bottom: 6px; }
.radios label { display: flex; align-items: center; gap: 10px; height: 38px; }
.radios input { appearance: none; width: 28px; height: 28px; border-radius: 50%; background: #fff; box-shadow: inset 0 0 0 1px #c6c6c6, inset 0 2px 3px rgba(0, 0, 0, .12); }
.radios input:checked { background: radial-gradient(circle, #fff 6px, transparent 7px), linear-gradient(#5cbc3f, #3cab1b); box-shadow: 0 1px 2px rgba(0, 0, 0, .2); }

.sheet-foot { display: flex; justify-content: flex-end; gap: 16px; height: 122px; padding: 40px 40px 0; border-top: 2px solid #d2d2d2; background: #ebebeb; }
.sheet-foot .btn { width: 128px; padding: 0; background: #fff; box-shadow: 0 0 1px rgba(0, 0, 0, .4), 0 1px 3px rgba(0, 0, 0, .3); }
.sheet-foot .primary { background: linear-gradient(#5cbc3f, #3cab1b); color: #fff; font-weight: 500; }
```
